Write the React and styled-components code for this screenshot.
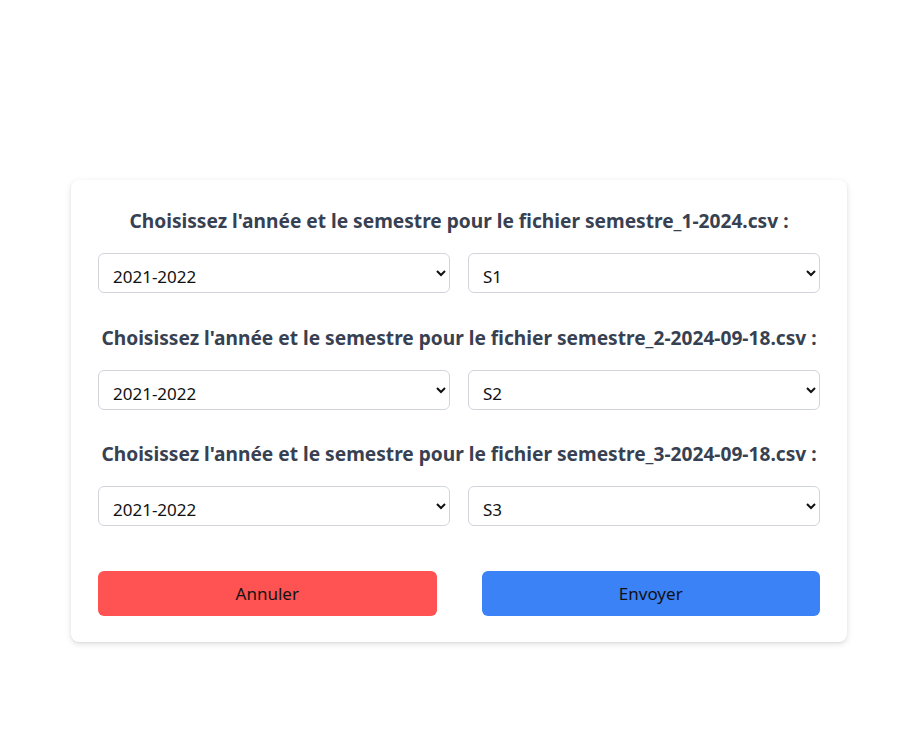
import React from 'react'
import styled, { createGlobalStyle } from 'styled-components'

const GlobalStyle = createGlobalStyle`
  html, body {
    margin: 0;
    padding: 0;
    background: #ffffff;
    font-family: 'Noto Sans', 'Open Sans', sans-serif;
  }
`

const Page = styled.div`
  width: 901px;
  height: 744px;
  padding-top: 180px;
  box-sizing: border-box;
`

const Card = styled.form`
  width: 776px;
  margin-left: 71px;
  box-sizing: border-box;
  padding: 27px 27px 26px 27px;
  background: #fff;
  border-radius: 8px;
  box-shadow: 0 2px 6px rgba(0, 0, 0, 0.12), 0 1px 2px rgba(0, 0, 0, 0.06);
`

const Section = styled.div`
  margin-bottom: ${p => (p.$last ? 0 : 30.5)}px;
`

const Title = styled.h3`
  margin: 0 0 18px 0;
  text-align: center;
  font-size: 19.15px;
  line-height: 28px;
  font-weight: 700;
  color: #374151;
  white-space: nowrap;
`

const Row = styled.div`
  display: grid;
  grid-template-columns: 1fr 1fr;
  column-gap: 18px;
`

const Select = styled.select`
  height: 40px;
  width: 100%;
  box-sizing: border-box;
  border: 1px solid #d1d5db;
  border-radius: 6px;
  background: #fff;
  padding: 7px 10px 0 10px;
  font-family: inherit;
  font-size: 17px;
  color: #111;
`

const Buttons = styled.div`
  display: grid;
  grid-template-columns: 1fr 1fr;
  column-gap: 45px;
  margin-top: 45px;
`

const Button = styled.button`
  height: 45px;
  border: none;
  border-radius: 6px;
  background: ${p => p.$bg};
  color: #111;
  font-family: inherit;
  font-size: 17px;
  cursor: pointer;
`

const years = ['2021-2022', '2022-2023', '2023-2024', '2024-2025']
const semesters = ['S1', 'S2', 'S3', 'S4', 'S5', 'S6']

const files = [
  { name: 'semestre_1-2024.csv', semester: 'S1' },
  { name: 'semestre_2-2024-09-18.csv', semester: 'S2' },
  { name: 'semestre_3-2024-09-18.csv', semester: 'S3' },
]

export default function App() {
  return (
    <Page>
      <GlobalStyle />
      <Card onSubmit={e => e.preventDefault()}>
        {files.map((f, i) => (
          <Section key={f.name} $last={i === files.length - 1}>
            <Title>
              Choisissez l'année et le semestre pour le fichier {f.name} :
            </Title>
            <Row>
              <Select defaultValue="2021-2022">
                {years.map(y => (
                  <option key={y}>{y}</option>
                ))}
              </Select>
              <Select defaultValue={f.semester}>
                {semesters.map(s => (
                  <option key={s}>{s}</option>
                ))}
              </Select>
            </Row>
          </Section>
        ))}
        <Buttons>
          <Button type="button" $bg="#ff5252">
            Annuler
          </Button>
          <Button type="submit" $bg="#3b82f6">
            Envoyer
          </Button>
        </Buttons>
      </Card>
    </Page>
  )
}
